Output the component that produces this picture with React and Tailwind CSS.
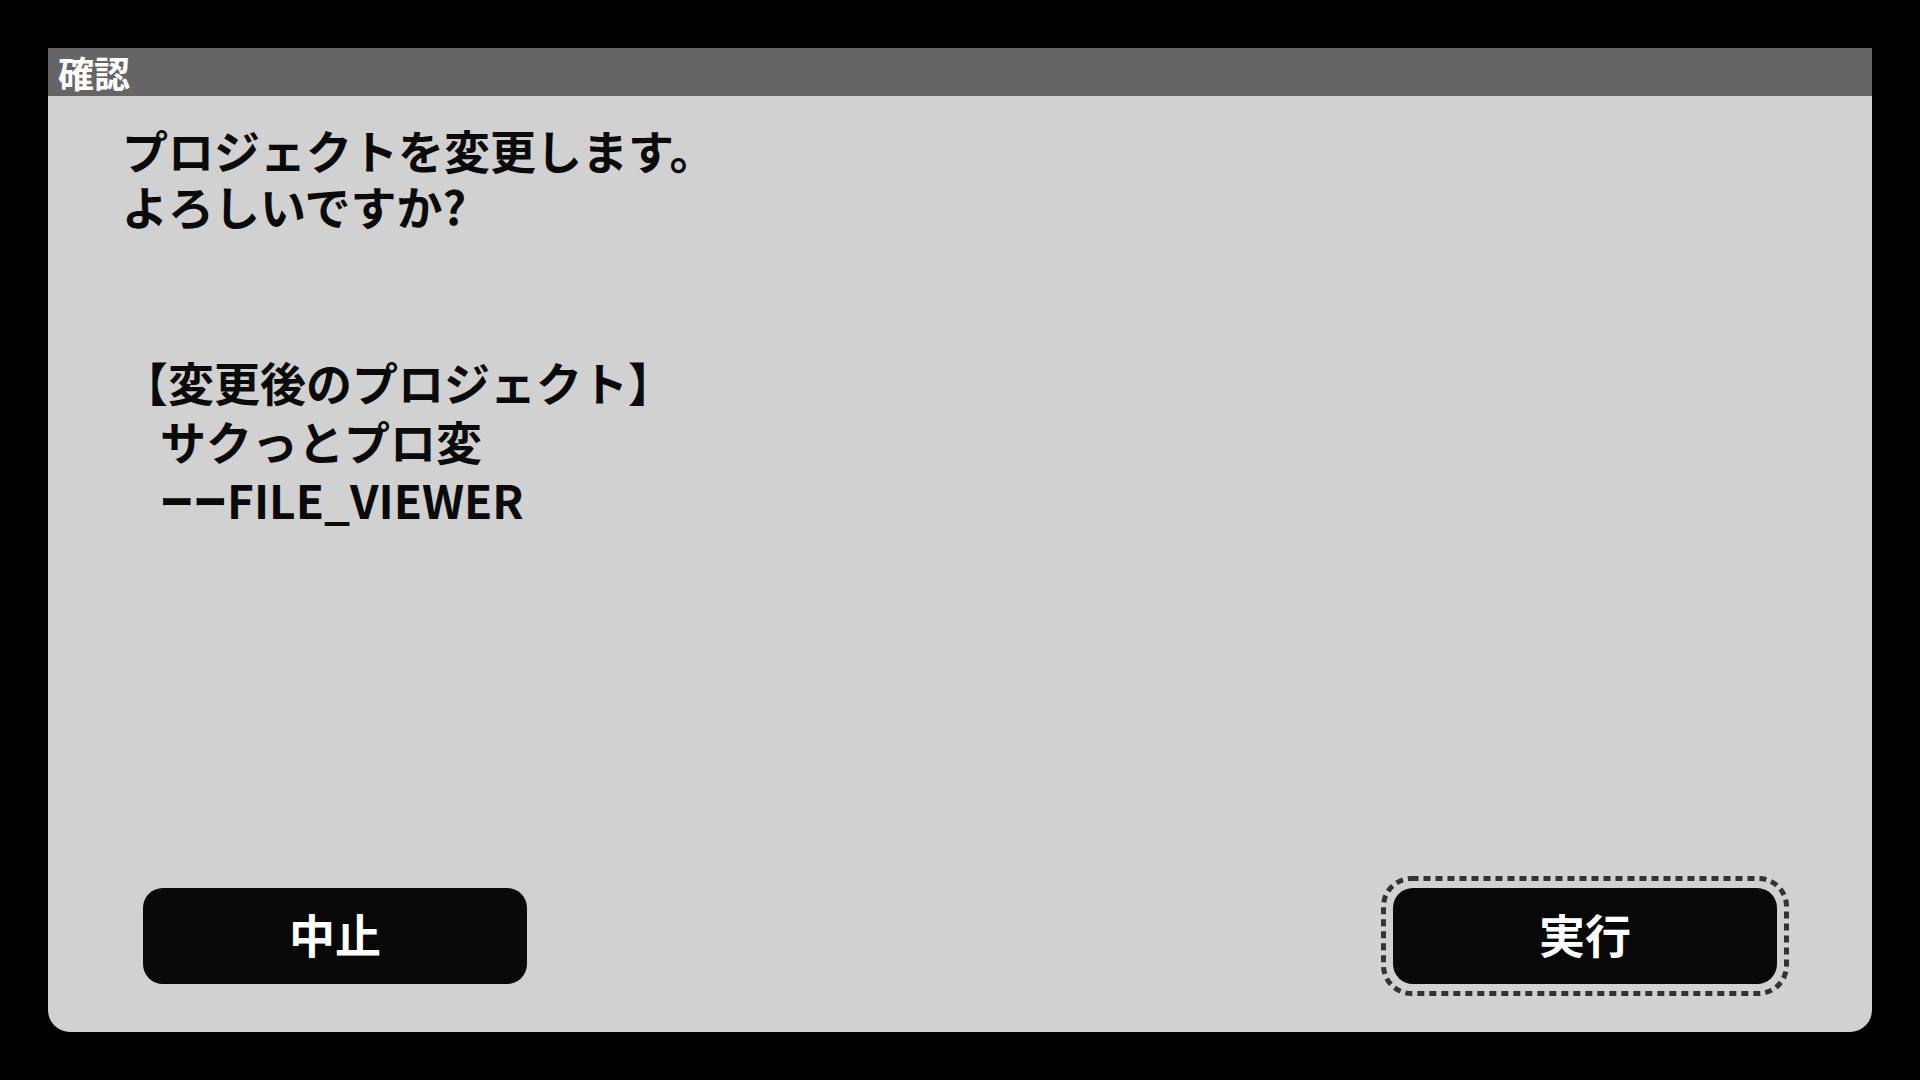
export default function App() {
  const font = { fontFamily: '"Noto Sans CJK JP", "Noto Sans", sans-serif' }

  return (
    <div className="w-full h-screen bg-black p-12 flex" style={font}>
      <div className="flex-1 flex flex-col bg-[#d1d1d1] rounded-b-[22px] overflow-hidden">

        {/* title bar */}
        <div className="h-12 bg-[#656565] flex items-center pl-[10px]">
          <span className="text-white font-bold text-[36px] leading-[48px]">確認</span>
        </div>

        {/* message */}
        <div className="flex-1 flex flex-col pl-[74px] pt-[25px] text-[#0a0a0a] font-bold">
          <div className="text-[46px] leading-[56px]">
            <p>プロジェクトを変更します。</p>
            <p>よろしいですか?</p>
          </div>

          <div className="mt-[119px] text-[46px] leading-[59px]">
            <p>【変更後のプロジェクト】</p>
            <p className="pl-[38px]">サクっとプロ変</p>
            <p className="pl-[38px]">
              <span className="inline-block origin-left scale-x-[0.73] -mr-[25px]">ーー</span>
              FILE_VIEWER
            </p>
          </div>
        </div>

        {/* buttons */}
        <div className="flex justify-between px-[95px] pb-12">
          <button className="w-[384px] h-[96px] pb-[5px] rounded-[20px] bg-[#080808] text-white font-bold text-[46px] flex items-center justify-center">
            中止
          </button>

          <div className="relative">
            <button className="w-[384px] h-[96px] pb-[5px] rounded-[20px] bg-[#080808] text-white font-bold text-[46px] flex items-center justify-center">
              実行
            </button>
            <svg
              className="absolute pointer-events-none"
              style={{ left: -12, top: -12 }}
              width="408"
              height="120"
            >
              <rect
                x="2.5"
                y="2.5"
                width="403"
                height="115"
                rx="28"
                fill="none"
                stroke="#333333"
                strokeWidth="5"
                strokeDasharray="7 5"
              />
            </svg>
          </div>
        </div>

      </div>
    </div>
  )
}
